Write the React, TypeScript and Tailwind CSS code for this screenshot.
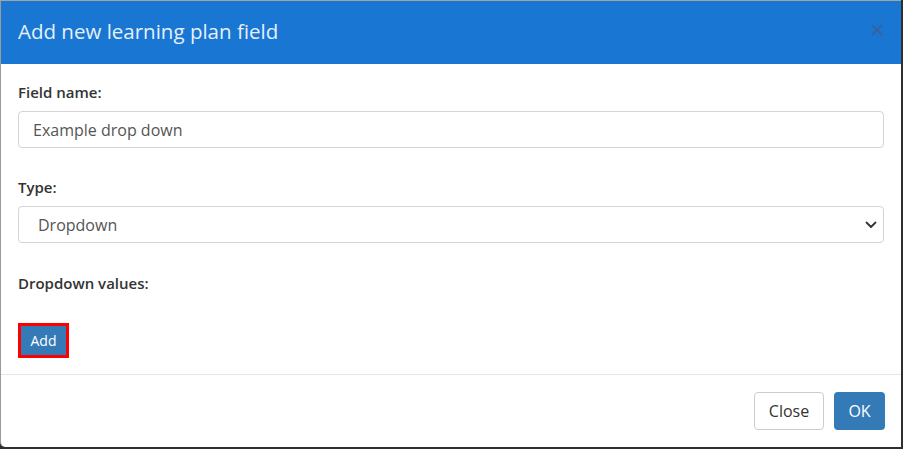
import React from 'react';

const font = { fontFamily: '"Open Sans", "Noto Sans", sans-serif' };

const App: React.FC = () => {
  return (
    <div className="w-[903px] h-[449px] bg-[#2f2f2f] overflow-hidden" style={font}>
      <div className="w-[901px] h-[1px] bg-[#a3a3a3]" />
      {/* Modal */}
      <div className="w-[901px] h-[446px] bg-white border-l border-[#9a9a9a] rounded-bl-[5px] flex flex-col">
        <div className="h-[63px] bg-[#1976d2] flex items-center justify-between pl-[17px] pr-[18px]">
          <h4 className="text-[20.5px] text-[#e4f0fb] leading-none pb-[2px]">Add new learning plan field</h4>
          <svg width="12" height="12" viewBox="0 0 12 12" className="mb-[5px]">
            <path d="M1 1 L11 11 M11 1 L1 11" stroke="#3563a0" strokeWidth="2" />
          </svg>
        </div>

        <div className="flex-1 px-[17px] pt-[17px]">
          <label className="block text-[15px] font-semibold text-[#333] leading-[22px]">Field name:</label>
          <div className="mt-[8px] h-[37px] border border-[#d4d4d4] rounded-[4px] flex items-center px-[14px] text-[16px] text-[#555]">
            Example drop down
          </div>

          <label className="block mt-[28px] text-[15px] font-semibold text-[#333] leading-[22px]">Type:</label>
          <div className="mt-[8px] h-[37px] border border-[#d4d4d4] rounded-[4px] flex items-center justify-between pl-[19px] pr-[6px] text-[16px] text-[#555]">
            <span>Dropdown</span>
            <svg width="12" height="8" viewBox="0 0 12 8" fill="none">
              <path d="M1.5 1.5 L6 6 L10.5 1.5" stroke="#333" strokeWidth="1.8" strokeLinecap="round" strokeLinejoin="round" />
            </svg>
          </div>

          <label className="block mt-[29px] text-[15px] font-semibold text-[#333] leading-[22px]">Dropdown values:</label>
          <div className="mt-[29px] inline-block border-[3px] border-[#ff0000]">
            <button className="block w-[45px] h-[29px] bg-[#337ab7] text-white text-[14px] leading-none">Add</button>
          </div>
        </div>

        <div className="h-[73px] border-t border-[#e5e5e5] flex items-start justify-end gap-[10px] pt-[17px] pr-[16px]">
          <button className="w-[70px] h-[38px] border border-[#ccc] rounded-[4px] text-[16px] text-[#333] bg-white">Close</button>
          <button className="w-[51px] h-[38px] rounded-[4px] text-[16px] text-white bg-[#337ab7]">OK</button>
        </div>
      </div>
    </div>
  );
};

export default App;
